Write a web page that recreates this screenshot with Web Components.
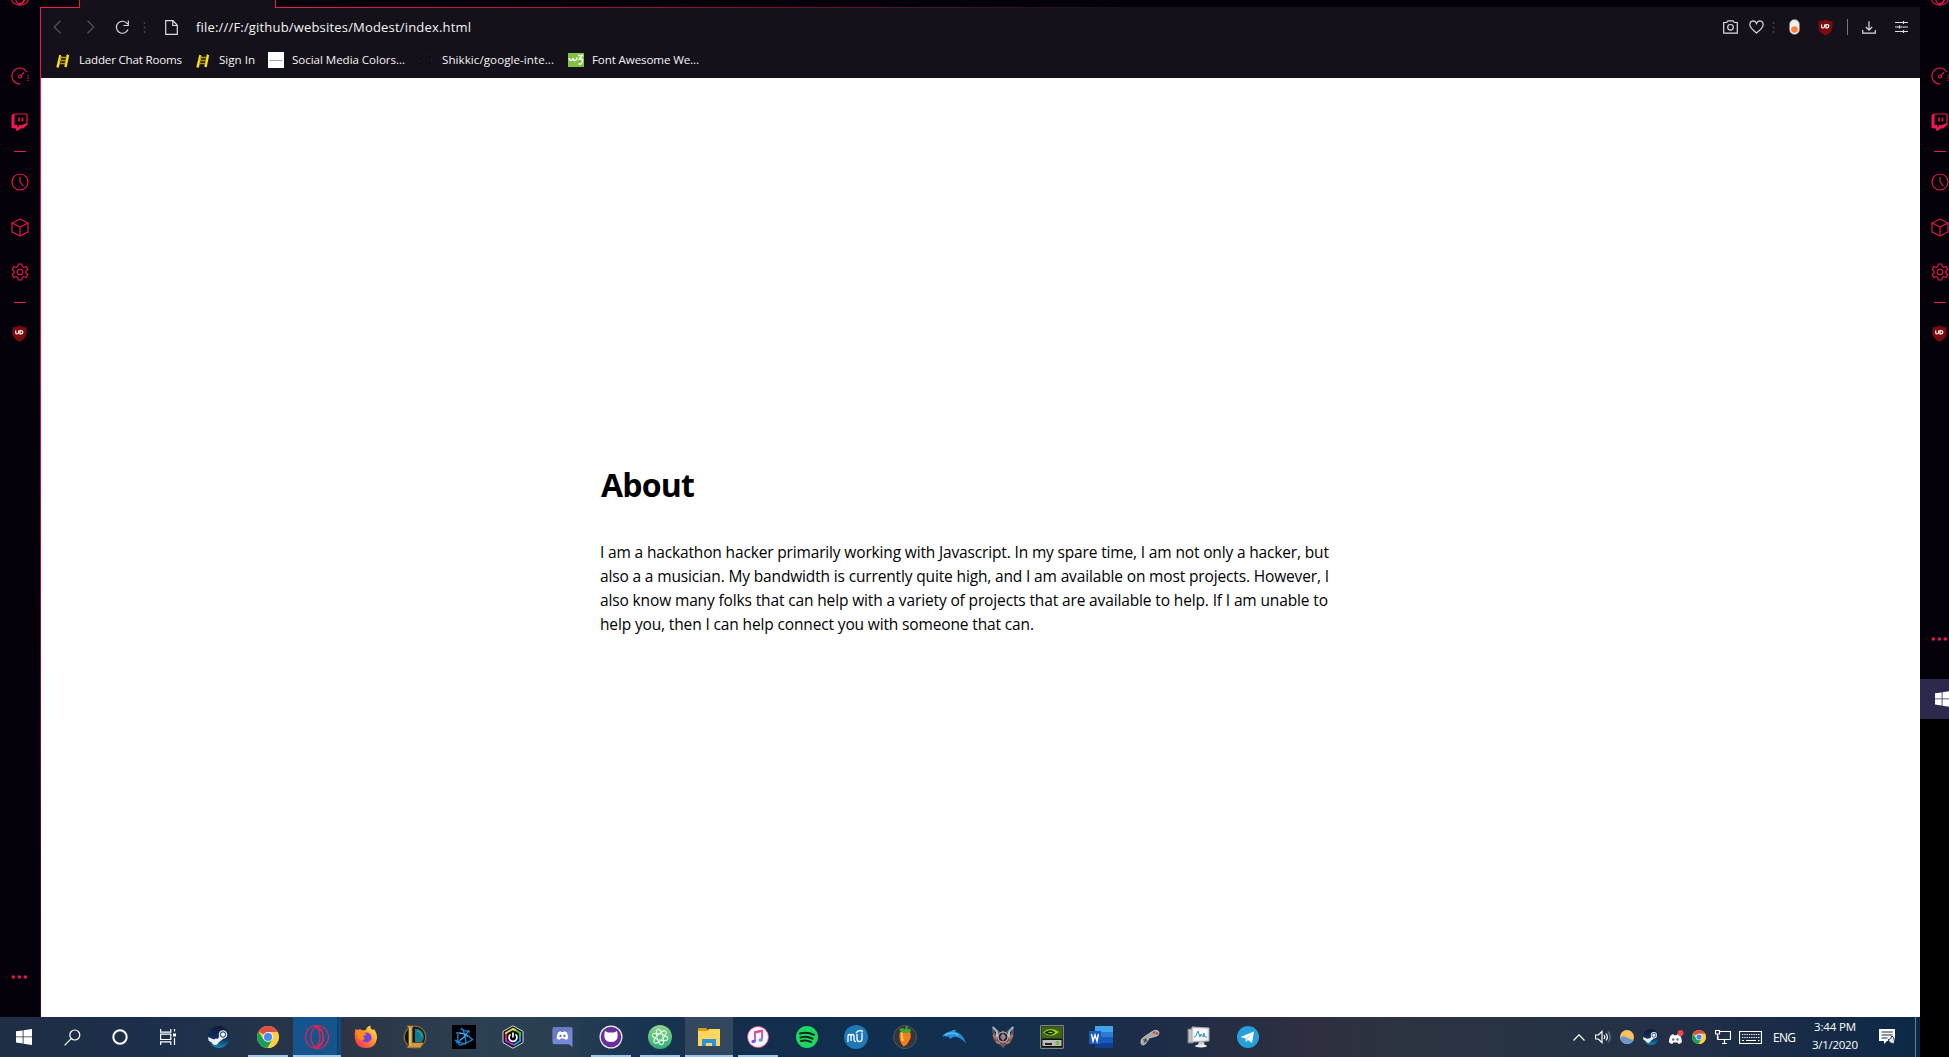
<!DOCTYPE html>
<html lang="en">
<head>
<meta charset="utf-8">
<title>Modest</title>
<style>
html,body{margin:0;padding:0;background:#000;width:1949px;height:1057px;overflow:hidden}
body{font-family:"Open Sans","Noto Sans",sans-serif}
</style>
</head>
<body>
<desk-top></desk-top>
<script>
const chrome = '<circle cx="11" cy="11" r="11" fill="#fc3"/><path d="M11 11L1.5 5.5A11 11 0 0 1 20.5 5.5L21 6H11z" fill="#db5044"/><path d="M1.5 5.5A11 11 0 0 0 10.5 22L15.3 13.5 11 11 6.5 13.5z" fill="#1a9f5b"/><path d="M20.5 6H11v5l4.5 2.5-5 8.500A11 11 0 0 0 20.500 6z" fill="#ffce45"/><circle cx="11" cy="11" r="5" fill="#f2f2f2"/><circle cx="11" cy="11" r="4" fill="#4688f4"/>';
const steam = '<defs><linearGradient id="g" x1="0" y1="0" x2="0" y2="1"><stop stop-color="#101a38"/><stop offset=".6" stop-color="#0d3461"/><stop offset="1" stop-color="#1387b8"/></linearGradient></defs><circle cx="11" cy="11" r="11" fill="url(#g)"/><path d="M0 11l6 2.500q2-1.500 3.500-.5l3-4L15 13l-4.500 3.500q-1 3-4 2.500-2-.3-2.700-2.500L.7 14.800z" fill="#eee"/><circle cx="15" cy="8.500" r="4.300" fill="#eee"/><circle cx="15" cy="8.500" r="2.700" fill="#eee" stroke="#123057" stroke-width="1"/>';
const discordFace = '<path d="M3 3Q5 1.500 6.500 1.500L7 2.500h3l.5-1Q12 1.500 14 3q2 4 2 7.500-2 2-4 2l-1-1.500H6L5 12.500q-2 0-4-2Q1 7 3 3z" fill="#fff"/><ellipse cx="6" cy="7.500" rx="1.400" ry="1.500" fill="#5a66ae"/><ellipse cx="11" cy="7.500" rx="1.400" ry="1.500" fill="#5a66ae"/>';
const L = 'fill="none" stroke="#dcdcde" stroke-width="1.2"';
const R = 'fill="none" stroke="#f0184c" stroke-width="1.1"';
const W = 'fill="none" stroke="#fff" stroke-width="1.2"';
const ICONS = {
 opera:[22,22,`<g ${R}><circle cx="11" cy="11" r="9.300"/><ellipse cx="11" cy="11" rx="4.700" ry="8.500"/><path d="M9 2.500Q16.500 5 16.500 11T9 19.500"/></g>`],
 gauge:[18,18,`<g ${R}><path d="M9.500 17A8 8 0 1 1 15.800 5"/><circle cx="9" cy="9.500" r="1.500"/><path d="M10.200 8.200L13 5.500"/><path d="M17 8v6" stroke-dasharray="1.500 1"/></g>`],
 twitch:[17,18,'<path d="M3 1h13v10l-4 4H9l-2 2v-2H3z" fill="#05010b" stroke="#f0184c" stroke-width="1.200"/><path d="M.5 2L3 .7V12h3.500v2.200L8.500 12H11l4.500-2v2L12 15H9.500l-3 2.500H5V15H.5z" fill="#f0184c"/><path d="M8 4.500v4M11.500 4.500v4" stroke="#f0184c" stroke-width="1.500"/>'],
 dash:[12,2,'<path d="M0 .5h12" stroke="#f0184c"/>'],
 clock:[18,18,`<g ${R}><circle cx="9" cy="9" r="8"/><path d="M9 4v5l3.500 4"/></g>`],
 cube:[18,19,`<path ${R} d="M9 1L17 5v9l-8 4-8-4V5zM1 5l8 4 8-4M9 9v9"/>`],
 gear:[18,18,`<path ${R} d="M7.300 1h3.400l.5 2.500 1.500.9 2.300-1 1.800 3L15 8v2l1.800 1.600-1.800 3-2.300-1-1.500.9-.5 2.500H7.300l-.5-2.500-1.500-.9-2.300 1-1.800-3L3 10V8L1.200 6.400l1.800-3 2.300 1 1.500-.9z"/><circle ${R} cx="9" cy="9" r="2.800"/>`],
 shield:[15,17,'<path d="M7.500.5Q10 2.300 14.300 2.500V8q0 5.500-6.800 8.500Q.7 13.500.7 8V2.500Q5 2.300 7.500.5z" fill="#800910" stroke="#551015" stroke-width=".7"/><path d="M3.700 5.500v2.200q0 1.300 1.300 1.300t1.600-1.300V5.500M8 5.500v3.400h.8q2 0 2-1.700T8.800 5.500z" fill="none" stroke="#fff" stroke-width="1.200"/>'],
 more:[17,4,'<g fill="#f0184c"><circle cx="2.300" cy="2" r="1.700"/><circle cx="8.300" cy="2" r="1.700"/><circle cx="14.300" cy="2" r="1.700"/></g>'],
 back:[9,14,'<path d="M7.500 .8L1.200 7l6.300 6.200" fill="none" stroke="#55535c" stroke-width="1.200"/>'],
 fwd:[9,14,'<path d="M1.500 .8L7.800 7l-6.300 6.200" fill="none" stroke="#55535c" stroke-width="1.200"/>'],
 reload:[15,14,`<path ${L} stroke-width="1.500" d="M13 9.500A6 6 0 1 1 12.500 4M13.300.5v5H8.500"/>`],
 dots:[3,11,'<path d="M1.500 0v11" stroke="#403d49" stroke-width="1.600" stroke-dasharray="2 2.500"/>'],
 file:[13,15,`<path ${L} d="M.7.700h7.300l4.300 4.600v9H.7zM7.800.700v4.800h4.500"/>`],
 camera:[15,14,`<path ${L} d="M.7 2.500h3L5 .8h5l1.300 1.700h3v10.700H.7z"/><circle ${L} cx="7.500" cy="7.300" r="2.800"/>`],
 heart:[15,14,`<path ${L} d="M7.500 13Q1 8 .8 4.800.8 1 4.200.8 6.500.9 7.500 3.500 8.500.9 10.800.8q3.400.2 3.400 4Q14 8 7.500 13z"/>`],
 pill:[11,16,'<rect x=".5" y=".5" width="10" height="15" rx="5" fill="#eee" stroke="#777" stroke-width=".5"/><circle cx="5.500" cy="10.500" r="3.300" fill="#fb8237"/>'],
 bar:[1,16,'<path d="M.5 0v16" stroke="#77757d"/>'],
 download:[14,13,`<path ${L} d="M7 .3v8.700M3.800 6L7 9.200 10.200 6M.7 9v3.200h12.600V9"/>`],
 sliders:[13,12,`<path ${L} stroke-width="1.300" d="M0 1.500h13M0 6h13M0 10.500h13M8.500 0v3M4.500 4.500v3M8.500 9v3"/>`],
 ladder:[14,16,'<path d="M4.500 3L1.500 15.500M12 2.500L9.500 15" stroke="#fbe01d" stroke-width="2.500"/><path d="M4 5.500h6.500M3.500 8.500h6.500M3 11.500h6.500" stroke="#b59a10" stroke-width="1.500"/><path d="M5 2l1 2M12 0l.7 3" stroke="#000"/>'],
 white:[16,16,'<path fill="#fff" d="M0 0h16v16H0z"/><path d="M1.500 8.500h13" stroke="#8a8d98" stroke-width="1.200" stroke-dasharray="1.500 .4"/>'],
 octo:[14,14,'<path d="M5 13Q1 12 1 6.500T7 .8t6 5.700T9 13" fill="none" stroke="#1b1921"/><path d="M1 6l2-2M1 10q2 0 2 2M10 4h2.500M10 11h2.500" stroke="#050308"/>'],
 w3:[16,14,'<path fill="#7fc142" d="M0 0h16v14H0z"/><path d="M1 5q.5 2.800 2.300 2.300Q5 7 5 5q.3 3 2.200 2.300Q9 7 9 4.500M10 2.500h4.300L11.500 6q3.300-.5 3 2.500T10.500 11" fill="none" stroke="#fff" stroke-width="1.400"/>'],
 win:[16,16,'<path fill="#fff" d="M0 2.300L6.700 1.400V7.500H0zM7.500 1.200L16 0v7.500H7.500zM0 8.300h6.700v6.200L0 13.600zM7.500 8.300H16V16L7.500 14.700z"/>'],
 search:[17,17,`<circle ${W} cx="10.800" cy="6" r="5"/><path ${W} d="M7.200 9.700L.6 16.300"/>`],
 cortana:[16,16,'<circle cx="8" cy="8" r="6.700" fill="none" stroke="#fff" stroke-width="2"/>'],
 view:[17,16,`<path ${W} d="M.6 0v3.200h10.200V0M.6 16v-3.200h10.200V16M.6 5.200h10.200v5.300H.6zM14.500 0v2.500M14.500 9v7"/><path fill="#fff" d="M13 4.500h3v3h-3z"/>`],
 steam:[22,22,steam], chrome:[22,22,chrome],
 steamS:[16,16,`<g transform="scale(.727)">${steam}</g>`], chromeS:[14,14,`<g transform="scale(.636)">${chrome}</g>`],
 operaL:[26,26,'<g fill="none" stroke="#e8224f" stroke-width="1.200"><circle cx="13" cy="13" r="11.500"/><ellipse cx="13" cy="13" rx="6" ry="10.500"/><path d="M10 2.800Q19 5 19.500 13T10 23.200M14 5q4 8 0 16"/></g>'],
 firefox:[24,24,'<defs><linearGradient id="g" x1="1" y1="0" x2=".1" y2="1"><stop stop-color="#fff44f"/><stop offset=".45" stop-color="#ff9a2a"/><stop offset="1" stop-color="#ff2358"/></linearGradient></defs><path d="M1 14Q0 8 1.500 4L4 5l2-1 2 1.500 4-.5q0-3 4.500-4.500Q16 4 19 5l1-1q3.500 5 3 9.500Q21.500 23 12 23T1 14z" fill="url(#g)"/><circle cx="12.500" cy="12.500" r="5" fill="#7142df"/><path d="M3 7q6-1 10 3-3-.5-4 1.500l2 2q-3 3-7 0z" fill="#ff8c16"/>'],
 lol:[24,24,'<circle cx="12" cy="12" r="10.800" fill="#0b1418" stroke="#8a6c34" stroke-width="1.300"/><path d="M12 3.500q8.500.5 9 8.500-.5 3.500-2.500 5H12z" fill="#147b8c"/><path d="M14 6q5 1 5 6" fill="none" stroke="#36b7bd"/><path d="M3.500.5h7.500l-1.500 2.500V17.500H21L17.500 23H3.500L5.500 20V3.500z" fill="#c99b49" stroke="#624416" stroke-width=".8"/><path d="M7 3v17" stroke="#efcf7d" stroke-width="1.200"/>'],
 battle:[24,24,'<path fill="#000" d="M0 0h24v24H0z"/><path d="M9 3q4 2 5 16M4 8q10-1 17 7M4 18q7-3 13-13M6 9q-1 12 3 11 6-2 11-5M9 4q3 2 9 3M3 15q4 3 11 4" fill="none" stroke="#168be4" stroke-width="1.300"/><path d="M7 8q5 0 9 4M8 15q4-2 7-7" fill="none" stroke="#5bc3ff" stroke-width=".8"/>'],
 hex:[24,24,'<path d="M12 .8l10 5.600v11.200l-10 5.600-10-5.600V6.400z" fill="#111" stroke="#ddd"/><g fill="none" stroke-width="2"><path d="M5 9V8l7-4 3 1.500" stroke="#e8df21"/><path d="M15 5.500l4 2.500v3" stroke="#28cf58"/><path d="M19 11v5l-6 4" stroke="#189de3"/><path d="M13 20l-8-4v-3" stroke="#b32ce0"/><path d="M5 13V9" stroke="#e5202c"/></g><circle cx="12" cy="12" r="6" fill="#090909"/><path d="M9.500 9.300a4 4 0 1 0 5 0M12 7.500v5" fill="none" stroke="#fff" stroke-width="1.700"/>'],
 discord:[21,22,`<path d="M2.500 1h16q2 0 2 2v18l-3.500-2.700H2.500q-2 0-2-2V3q0-2 2-2z" fill="#7289da"/><path d="M2.500 1h16q2 0 2 2L.5 14V3q0-2 2-2z" fill="#6672b8" opacity=".6"/><g transform="translate(3.800 4) scale(.78)">${discordFace}</g>`],
 github:[24,24,'<circle cx="12" cy="12" r="11.500" fill="#eee"/><circle cx="12" cy="12" r="10.300" fill="#68309b"/><path d="M6 6l3 1.500h6L18 6q1.500 5-.3 8.500Q16 17 12 17t-5.700-2.500Q4.500 11 6 6z" fill="#fff"/>'],
 atom:[24,24,'<defs><linearGradient id="g" x1="0" y1="0" x2="0" y2="1"><stop stop-color="#8dd48b"/><stop offset="1" stop-color="#2dac76"/></linearGradient></defs><circle cx="12" cy="12" r="12" fill="url(#g)"/><g fill="none" stroke="#e3f8e5"><ellipse cx="12" cy="12" rx="3" ry="8" transform="rotate(-15 12 12)"/><ellipse cx="12" cy="12" rx="3" ry="8" transform="rotate(45 12 12)"/><ellipse cx="12" cy="12" rx="3" ry="8" transform="rotate(105 12 12)"/></g>'],
 folder:[22,18,'<path d="M0 0h8l2 2h4v2H0z" fill="#df9b13"/><path d="M0 3h9l2-2h11v17H0z" fill="#ffd75d"/><path d="M4 18v-7h14v7h-4v-3H8v3z" fill="#318fe0"/>'],
 itunes:[22,22,'<circle cx="11" cy="11" r="10.500" fill="#fbf7fc" stroke="#e8478e" stroke-width=".8"/><path d="M8 15.500V6l7-1.500V13" fill="none" stroke="#bc43ba" stroke-width="1.700"/><path d="M8 6.500L15 5" stroke="#ed4380" stroke-width="2"/><ellipse cx="6.500" cy="15.500" rx="2.200" ry="1.700" fill="#735ee0"/><ellipse cx="13.700" cy="14" rx="2.200" ry="1.700" fill="#51a0e5"/>'],
 spotify:[22,22,'<circle cx="11" cy="11" r="11" fill="#1ed760"/><path d="M4 7.500Q11 5.500 18 8.800M4.500 11.500q6-1.800 12 1.200M5 15q5-1.500 10 1" fill="none" stroke="#10251a" stroke-width="2" stroke-linecap="round"/>'],
 muse:[24,24,'<circle cx="12" cy="12" r="12" fill="#1f78b8"/><path d="M4 17v-6q0-1.500 1.500-1.500T7 11v5-5q0-1.500 1.500-1.500T10 11v4q0 1.500 2 1.500M13 9v5q0 2.500 2.500 2.500T18 14V7.500M12 8q3-4 7-1.500" fill="none" stroke="#fff" stroke-width="1.300"/>'],
 fl:[24,24,'<circle cx="12" cy="12" r="11.500" fill="#33373b" stroke="#555"/><path d="M7 7q5-3 10 0 2 5-1 9-3 6-6 5-5-6-3-14z" fill="#fa7c18"/><path d="M9 8q-1 4 1 8" stroke="#ffd06d" stroke-width="2" fill="none"/><path d="M6 4q5-2 6 1 0-4 3-4l-1 3q4-1 4 2-3 3-5 2-4 1-7-4z" fill="#47a92c"/>'],
 dolphin:[24,14,'<path d="M0 6.500Q4 1.500 9 1.200L11 0h3.500l-1.500 1.700Q21 3 24 13.500 20 8 13 6.500 10 7 8 9L7 6.700Q3 6 0 6.500z" fill="#2594df"/><path d="M3 5.200q6-4 13-.7" stroke="#75ccff" fill="none"/>'],
 crest:[24,24,'<path d="M1 1l6 4 3 3 2-3 2 3 3-3 6-4-1 10q0 6-7 9l-3 3-3-3Q2 17 2 11z" fill="#6d5860"/><path d="M2 2l4 5v5M22 2l-4 5v5" stroke="#a1bedb" stroke-width="2"/><path d="M2 10l4 4M22 10l-4 4M5 17l4 1M19 17l-4 1" stroke="#b87a58" stroke-width="2"/><circle cx="12" cy="12" r="5" fill="#292235" stroke="#dacbb7"/><path d="M12 8l3 4-3 4-3-4z" fill="#aa6eac"/><path d="M12 9v6l2-3z" fill="#55bc80"/>'],
 nvidia:[24,24,'<path fill="#101010" stroke="#999c91" d="M.7.700h22.600v22.600H.7z"/><path fill="#3d6414" d="M1.500 1.500h21v12h-21z"/><path d="M3 7.500Q10 1 19 7q-8 7-16 .5z" fill="#99d31b"/><path d="M6 7.500q5-3 8 0-3 3-8 0z" fill="none" stroke="#122006" stroke-width="1.500"/><path fill="#bbb" d="M2.500 15h19v6h-19z"/><path d="M5 19h7" stroke="#222" stroke-width="2"/><circle cx="17.500" cy="18" r="2.200" fill="#80ba43"/>'],
 word:[24,22,'<path fill="#41a5ee" d="M6 0h18v6H6z"/><path fill="#2b7cd3" d="M6 6h18v5H6z"/><path fill="#185abd" d="M6 11h18v6H6z"/><path fill="#103f91" d="M6 17h18v5H6z"/><path fill="#185abd" d="M0 5h12v13H0z"/><path d="M2.500 8l1.500 7 2-6 2 6 1.500-7" fill="none" stroke="#fff" stroke-width="1.400"/>'],
 pad:[20,17,'<path d="M1 14q-1-4 3-6L13 2q5-2 6 1.500.500 3-4 4L9 9q-3 7-6 7-1.500 0-2-2z" fill="#aaa7a3" stroke="#ddd" stroke-width=".7"/><path d="M3.500 10.500l4 2M6 9.500l-1.500 4" stroke="#444" stroke-width="1.300"/><circle cx="14" cy="3.500" r="1.200" fill="#b44"/><circle cx="17" cy="4.500" r="1.200" fill="#b44"/>'],
 perf:[24,22,'<path d="M1 3h5v14H1z" fill="#bfc3c4" stroke="#777"/><path d="M5 1l17 1v13L5 16z" fill="#e7eced" stroke="#aaa"/><path d="M7 3l13 1v9l-13 1z" fill="#f8fcff"/><path d="M7 11l2-1 2-5 2 6 1-3 2 3 1-4 1 4h2" fill="none" stroke="#3d8fc0"/><path d="M12 16h5l1 4h-8z" fill="#ccc"/><ellipse cx="14" cy="20" rx="6" ry="1.500" fill="#eee"/>'],
 telegram:[22,22,'<circle cx="11" cy="11" r="11" fill="#26a0da"/><path d="M3.500 11L17 5.500 15 17l-4-3-2 2-.5-3.500z" fill="#fff"/><path d="M8.500 12.500L15 7.500l-5 6-1 2.500z" fill="#c6dcec"/>'],
 up:[12,7,`<path ${W} d="M.5 6.500L6 .8l5.500 5.700"/>`],
 sound:[17,14,`<path ${W} stroke-width="1" d="M.5 5h2.800L7 1.500v11L3.300 9H.5zM9 5q1.500 2 0 4M11 3.500q2.800 3.500 0 7"/><path d="M13.200 1.500q4 5.500 0 11" fill="none" stroke="#8090a0"/>`],
 weather:[14,14,'<circle cx="7" cy="7" r="7" fill="#fcc15f"/><path d="M0 8q3-3 6-1t8 3Q12 14 7 14T0 8z" fill="#6f96cc"/>'],
 discordS:[17,15,`<g transform="translate(1 3) scale(.87)">${discordFace}</g><circle cx="13.500" cy="3" r="3" fill="#f04747"/>`],
 net:[16,14,`<path ${W} stroke-width="1" d="M4 1.500h11.500v8H3V6M7 13.500h5M9.500 9.500v4M.5.500h4v3.500h-4zM2.500 4v5.500"/>`],
 keys:[23,13,`<path ${W} stroke-width="1" d="M.5.500h22v12H.5z"/><path d="M3 3.500h17.500M3 6.500h17.500" stroke="#fff" stroke-dasharray="1.300 1"/><path d="M3 9.500h2M7 9.500h10M19 9.500h1.500" stroke="#fff"/>`],
 note:[17,16,'<path d="M0 0h16v12H8l-3 3v-3H0z" fill="#fff"/><path d="M2.500 3h11M2.500 6h11M2.500 9h6" stroke="#172b45" stroke-width="1.200"/><path d="M13 7q-1 3-4 4 2 4 6 4 1-3 0-5 0-2-2-3z" fill="#dfe5ec" stroke="#172b45"/>']
};
class UiIcon extends HTMLElement{
 connectedCallback(){
  const [w,h,body]=ICONS[this.getAttribute('name')], box=this.getAttribute('box')||w;
  this.attachShadow({mode:'open'}).innerHTML=`<style>:host{display:flex;align-items:center;justify-content:center;flex:none;width:${box}px}svg{display:block;flex:none}</style><svg width="${w}" height="${h}" viewBox="0 0 ${w} ${h}">${body}</svg>`;
 }
}
customElements.define('ui-icon',UiIcon);

/* Single line whose tracking is adjusted so that it spans the given width. */
class FitText extends HTMLElement{
 connectedCallback(){
  const w=+this.getAttribute('width');
  this.attachShadow({mode:'open'}).innerHTML=`<style>:host{display:block;flex:none;width:${w}px;white-space:nowrap}span{display:inline-block}</style><span><slot></slot></span>`;
  const s=this.shadowRoot.querySelector('span');
  s.style.letterSpacing=(w-s.getBoundingClientRect().width)/(this.textContent.length-1)+'px';
 }
}
customElements.define('fit-text',FitText);

const row=(n,h)=>`<ui-icon name="${n}" style="height:${h}px"></ui-icon>`;
class OperaSidebar extends HTMLElement{
 connectedCallback(){
  this.attachShadow({mode:'open'}).innerHTML=`<style>:host{display:flex;flex-direction:column;align-items:center;box-sizing:border-box;width:40px;padding-right:1px;background:#05010b;overflow:hidden;flex:none}
  .top{height:22px;margin-top:-15px;padding-bottom:46.500px}.fill{flex:1}</style>
  <ui-icon class="top" name="opera"></ui-icon>
  ${row('gauge',45)}${row('twitch',46)}${row('dash',15)}${row('clock',45)}${row('cube',45)}${row('gear',45)}${row('dash',17)}${row('shield',44)}
  <span class="fill"></span><ui-icon name="more" style="height:4px;margin-bottom:38px"></ui-icon>`;
 }
}
customElements.define('opera-sidebar',OperaSidebar);

const ic=(n,b,m=0)=>`<ui-icon name="${n}" box="${b}" style="margin-left:${m}px"></ui-icon>`;
class OperaToolbar extends HTMLElement{
 connectedCallback(){
  this.attachShadow({mode:'open'}).innerHTML=`<style>
  :host{display:block;height:78px;background:#15111b;color:#f4f4f4;flex:none}
  .tabs{display:flex;height:8px;background:#05010b}
  .a,.c{box-sizing:border-box;height:8px;border-bottom:1px solid #f0184c}
  .a{width:38px}.b{width:197px;box-sizing:border-box;background:#15111b;border:1px solid #f0184c;border-width:0 1px}
  .c{flex:1;border-image:linear-gradient(90deg,#f0184c,#8c1438 24%,#15111b 52%) 1;border-width:0 0 1px}
  .bar,.marks{display:flex;align-items:center}
  .bar{height:38px;font-size:13px;line-height:38px}.marks{height:28px;font-size:11.600px;line-height:28px}
  .fill{flex:1}</style>
  <div class="tabs"><div class="a"></div><div class="b"></div><div class="c"></div></div>
  <div class="bar">${ic('back',9,12)}${ic('fwd',9,24)}${ic('reload',15,20)}${ic('dots',3,13)}${ic('file',13,19)}
   <fit-text width="275" style="margin-left:18px">file:///F:/github/websites/Modest/index.html</fit-text><span class="fill"></span>
   ${ic('camera',15)}${ic('heart',15,11)}${ic('dots',3,8)}${ic('pill',11,14)}${ic('shield',15,18)}${ic('bar',1,14)}${ic('download',14,14)}${ic('sliders',13,19)}<span style="width:12px"></span></div>
  <div class="marks">${ic('ladder',14,15)}<fit-text width="103" style="margin-left:9px">Ladder Chat Rooms</fit-text>
   ${ic('ladder',14,14)}<fit-text width="36" style="margin-left:9px">Sign In</fit-text>
   ${ic('white',16,13)}<fit-text width="113" style="margin-left:8px">Social Media Colors...</fit-text>
   ${ic('octo',14,14)}<fit-text width="112" style="margin-left:9px">Shikkic/google-inte...</fit-text>
   ${ic('w3',16,14)}<fit-text width="107" style="margin-left:8px">Font Awesome We...</fit-text></div>`;
 }
}
customElements.define('opera-toolbar',OperaToolbar);

class AboutPage extends HTMLElement{
 connectedCallback(){
  this.attachShadow({mode:'open'}).innerHTML=`<style>:host{display:flex;flex-direction:column;background:#fff;color:#000;flex:1;box-sizing:border-box;padding:383px 0 0 559px}
  h1{margin:0;padding-left:1px;font-size:32px;line-height:48px;font-weight:700}.p{margin-top:31px;font-size:15.500px;line-height:24px}</style>
  <h1><fit-text width="94">About</fit-text></h1>
  <div class="p"><fit-text width="729">I am a hackathon hacker primarily working with Javascript. In my spare time, I am not only a hacker, but</fit-text>
  <fit-text width="729">also a a musician. My bandwidth is currently quite high, and I am available on most projects. However, I</fit-text>
  <fit-text width="728">also know many folks that can help with a variety of projects that are available to help. If I am unable to</fit-text>
  <fit-text width="434">help you, then I can help connect you with someone that can.</fit-text></div>`;
 }
}
customElements.define('about-page',AboutPage);

class WinTaskbar extends HTMLElement{
 connectedCallback(){
  const apps=['steam','chrome:o','operaL:o on','firefox','lol','battle','hex','discord','github:o','atom:o','folder:o sel','itunes:o','spotify','muse','fl','dolphin','crest','nvidia','word','pad','perf','telegram'];
  this.attachShadow({mode:'open'}).innerHTML=`<style>
  :host{display:flex;height:40px;width:1920px;color:#fff;background:linear-gradient(90deg,#202e45 0,#1c2f4b 8%,#243449 14%,#2b3547 18%,#2b4052 25%,#2a4052 29%,#1a3551 33%,#142e4c 38%,#102f4e 46%,#152f4d 53%,#1f2d47 61%,#2e2f40 68%,#2c3341 73%,#263345 81%,#222f47 88%,#182b47 94%,#0b2947 100%)}
  .app{display:flex;justify-content:center;width:49px;box-sizing:border-box}
  .in{display:flex;justify-content:center;width:40px;height:40px;box-sizing:border-box}
  .in ui-icon{height:40px}.o .in{box-shadow:inset 0 -2px #9ac8f5}
  .on .in,.sel .in{width:48px}.on .in{background:linear-gradient(90deg,#15548c 44px,#0c3e6d 44px,#0c3e6d 45px,#124a7b 45px)}.sel .in{background:#33475e}
  .fill{flex:1}.tray{display:flex;align-items:center;font-size:12px}
  .clock{display:flex;flex-direction:column;align-items:center;width:46px;margin-left:16px;padding-bottom:2px;font-size:11.500px;line-height:18px}
  .edge{width:1px;height:40px;background:#687b8d;margin:0 4px 0 20px}</style>
  ${ic('win',48)}${ic('search',48)}${ic('cortana',48)}${ic('view',48)}<span style="width:2.500px"></span>
  ${apps.map(a=>{const [n,c='']=a.split(':');return `<div class="app ${c}"><div class="in"><ui-icon name="${n}"></ui-icon></div></div>`}).join('')}
  <span class="fill"></span>
  <div class="tray">${ic('up',12)}${ic('sound',17,10)}${ic('weather',14,8)}${ic('steamS',16,9)}${ic('discordS',17,8)}${ic('chromeS',14,8)}${ic('net',16,9)}${ic('keys',23,8)}
  <fit-text width="23" style="margin-left:11px">ENG</fit-text>
  <div class="clock"><fit-text width="42">3:44 PM</fit-text><fit-text width="46">3/1/2020</fit-text></div>
  ${ic('note',17,21)}<span class="edge" style="margin-left:19px"></span></div>`;
 }
}
customElements.define('win-taskbar',WinTaskbar);

class DeskTop extends HTMLElement{
 connectedCallback(){
  this.attachShadow({mode:'open'}).innerHTML=`<style>:host{display:flex;width:1949px;height:1057px;background:#000;overflow:hidden}
  .main{width:1920px;flex:none;display:flex;flex-direction:column}.browser{display:flex;height:1017px}
  .view{display:flex;flex-direction:column;flex:1;box-sizing:border-box;position:relative}
  .rule{width:1px;margin-top:7px;background:linear-gradient(#f0184c 0,#c0184a 40%,#35102a 90%)}
  .next{width:29px;overflow:hidden;flex:none}.next opera-sidebar{height:679px}.start{display:flex;height:40px;width:48px;background:#2c2a4c}</style>
  <div class="main"><div class="browser"><opera-sidebar></opera-sidebar><div class="rule"></div><div class="view"><opera-toolbar></opera-toolbar><about-page></about-page></div></div><win-taskbar></win-taskbar></div>
  <div class="next"><opera-sidebar></opera-sidebar><div class="start">${ic('win',46)}</div></div>`;
 }
}
customElements.define('desk-top',DeskTop);
</script>
</body>
</html>
